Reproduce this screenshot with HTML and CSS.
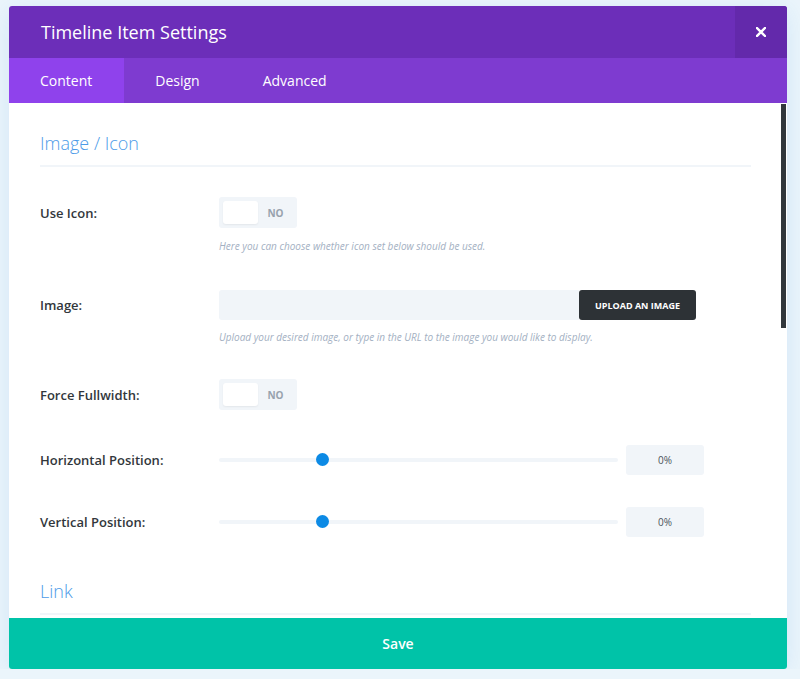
FILE: index.html
```html
<!DOCTYPE html>
<html lang="en">
  <head>
    <meta charset="utf-8" />
    <title>Timeline Item Settings</title>
    <link rel="stylesheet" href="styles.css">
  </head>
  <body>
    <div class="modal">
      <div class="modal-header">
        <h1 class="modal-title">Timeline Item Settings</h1>
        <button class="close" type="button">
          <svg width="10" height="10" viewBox="0 0 10 10">
            <path d="M1 1 L9 9 M9 1 L1 9" stroke="#fff" stroke-width="2.4" stroke-linecap="square" />
          </svg>
        </button>
      </div>

      <ul class="tabs">
        <li class="tab active">Content</li>
        <li class="tab">Design</li>
        <li class="tab">Advanced</li>
      </ul>

      <div class="modal-body">
        <div class="scrollbar"></div>

        <h2 class="section-title">Image / Icon</h2>

        <div class="field">
          <div class="row">
            <label class="label">Use Icon:</label>
            <div class="toggle"><span class="knob"></span><span class="toggle-text">NO</span></div>
          </div>
          <p class="desc">Here you can choose whether icon set below should be used.</p>
        </div>

        <div class="field field-image">
          <div class="row">
            <label class="label">Image:</label>
            <div class="upload">
              <input class="upload-input" type="text" />
              <button class="upload-btn" type="button">UPLOAD AN IMAGE</button>
            </div>
          </div>
          <p class="desc">Upload your desired image, or type in the URL to the image you would like to display.</p>
        </div>

        <div class="field">
          <div class="row">
            <label class="label">Force Fullwidth:</label>
            <div class="toggle"><span class="knob"></span><span class="toggle-text">NO</span></div>
          </div>
        </div>

        <div class="field">
          <div class="row">
            <label class="label">Horizontal Position:</label>
            <div class="range">
              <div class="track"><span class="thumb" style="left: 26%"></span></div>
              <div class="range-value">0%</div>
            </div>
          </div>
        </div>

        <div class="field field-last">
          <div class="row">
            <label class="label">Vertical Position:</label>
            <div class="range">
              <div class="track"><span class="thumb" style="left: 26%"></span></div>
              <div class="range-value">0%</div>
            </div>
          </div>
        </div>

        <h2 class="section-title">Link</h2>
      </div>

      <button class="save" type="button">Save</button>
    </div>
  </body>
</html>
```

FILE: styles.css
```css
body {
  margin: 0;
  padding: 0;
  background-color: #ebf5fb;
  font-family: "Open Sans", "Liberation Sans", sans-serif;
  color: #32373c;
}

.modal {
  width: 778px;
  margin: 6px 0 0 9px;
  border-radius: 3px;
  overflow: hidden;
  background-color: #fff;
  box-shadow: 0 4px 24px rgba(43, 135, 218, 0.12);
}

.modal-header {
  display: flex;
  align-items: stretch;
  height: 52px;
  background-color: #6c2eb9;
}

.modal-title {
  flex: 1;
  margin: 0;
  padding-left: 32px;
  line-height: 52px;
  font-size: 18px;
  font-weight: 500;
  color: #fff;
}

.close {
  display: flex;
  align-items: center;
  justify-content: center;
  width: 52px;
  border: 0;
  padding: 0;
  background-color: #6329ab;
  cursor: pointer;
}

.tabs {
  display: flex;
  list-style-type: none;
  margin: 0;
  padding: 0;
  height: 45px;
  background-color: #7e3bd0;
}

.tab {
  padding: 0 32px 0 31px;
  line-height: 45px;
  font-size: 14px;
  color: #fff;
}

.tab.active {
  background-color: #8f42ec;
}

.modal-body {
  position: relative;
  height: 515px;
  overflow: hidden;
  padding: 0 36px 0 31px;
}

.scrollbar {
  position: absolute;
  top: 1px;
  right: 1px;
  width: 5px;
  height: 224px;
  background-color: #32373c;
}

.section-title {
  margin: 0;
  padding: 28px 0 10px;
  border-bottom: 2px solid #f1f5f9;
  line-height: 24px;
  font-size: 18px;
  font-weight: 300;
  color: #4c9be8;
}

.field {
  margin-top: 30px;
}

.field + .field {
  margin-top: 35px;
}

.field + .field-image {
  margin-top: 37px;
}

.field + .field-last {
  margin-top: 32px;
  margin-bottom: 14px;
}

.row {
  display: flex;
  align-items: center;
}

.label {
  width: 179px;
  font-size: 13px;
  font-weight: 600;
  color: #32373c;
}

.desc {
  margin: 11px 0 0 179px;
  line-height: 14px;
  font-size: 10px;
  font-style: italic;
  color: #a3b0c2;
}

.field-image .desc {
  margin-top: 10px;
}

.toggle {
  display: flex;
  align-items: center;
  box-sizing: border-box;
  width: 78px;
  height: 31px;
  padding: 4px;
  border-radius: 3px;
  background-color: #f1f5f9;
}

.knob {
  width: 35px;
  height: 23px;
  border-radius: 3px;
  background-color: #fff;
  box-shadow: 0 1px 2px rgba(0, 0, 0, 0.06);
}

.toggle-text {
  flex: 1;
  text-align: center;
  font-size: 10px;
  font-weight: 700;
  color: #98a2ad;
}

.upload {
  display: flex;
  height: 30px;
}

.upload-input {
  box-sizing: border-box;
  width: 360px;
  height: 30px;
  border: 0;
  border-radius: 3px 0 0 3px;
  background-color: #f1f5f9;
}

.upload-btn {
  width: 117px;
  border: 0;
  border-radius: 3px;
  background-color: #2d3236;
  color: #fff;
  font-family: "Open Sans", sans-serif;
  font-size: 9px;
  font-weight: 700;
}

.range {
  display: flex;
  align-items: center;
}

.track {
  position: relative;
  width: 399px;
  height: 4px;
  border-radius: 2px;
  background-color: #f1f5f9;
}

.thumb {
  position: absolute;
  top: -5px;
  width: 13px;
  height: 13px;
  margin-left: -7px;
  border-radius: 50%;
  background-color: #0c8ae5;
}

.range-value {
  width: 78px;
  height: 30px;
  margin-left: 8px;
  border-radius: 3px;
  background-color: #f1f5f9;
  line-height: 30px;
  text-align: center;
  font-size: 10px;
  color: #4a525b;
}

.save {
  display: block;
  width: 100%;
  height: 51px;
  border: 0;
  background-color: #00c3a8;
  color: #fff;
  font-family: "Open Sans", sans-serif;
  font-size: 14px;
  font-weight: 600;
}
```
